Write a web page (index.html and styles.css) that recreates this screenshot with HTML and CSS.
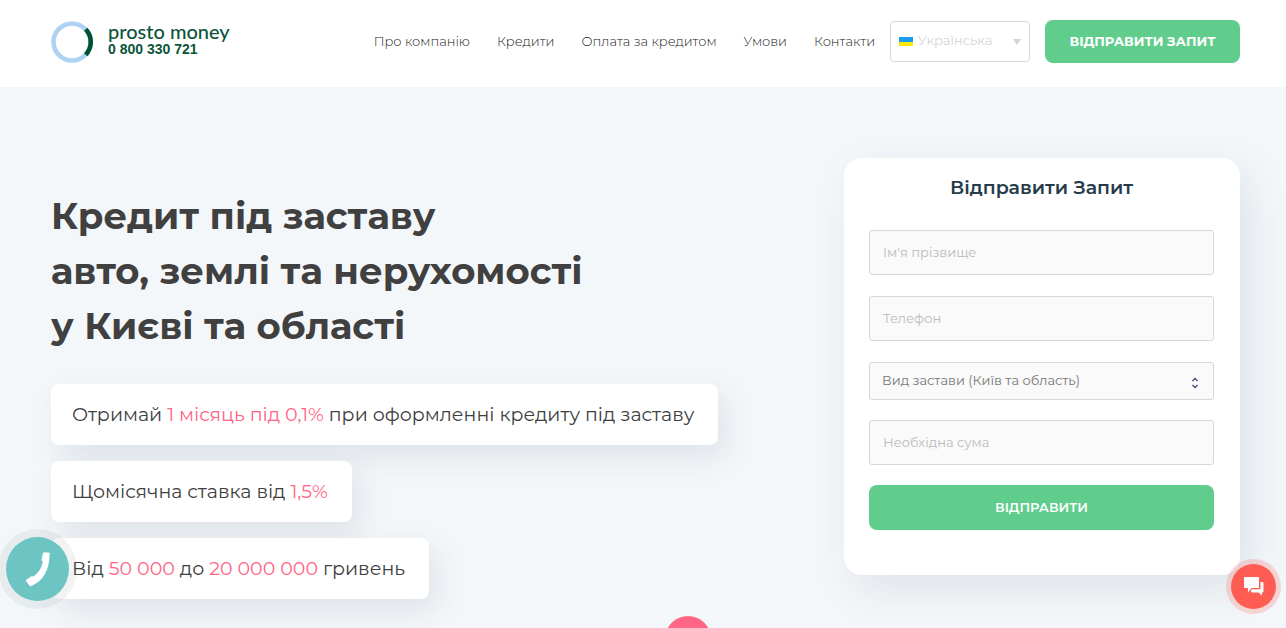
FILE: index.html
```html
<!DOCTYPE html>
<html lang="uk">
<head>
<meta charset="utf-8">
<meta name="viewport" content="width=device-width, initial-scale=1">
<title>Prosto Money</title>
<link rel="stylesheet" href="styles.css">
</head>
<body>
<header class="header">
  <a class="logo" href="#">
    <svg class="logo-mark" viewBox="0 0 42 42" aria-hidden="true">
      <circle cx="21" cy="21" r="18.5" fill="none" stroke="#aed2f2" stroke-width="4.6"/>
      <path d="M34.7 8.2A18.7 18.7 0 0 1 34.7 33.8" fill="none" stroke="#005234" stroke-width="4.6"/>
    </svg>
    <span class="logo-text">
      <span class="logo-name">prosto money</span>
      <span class="logo-phone">0 800 330 721</span>
    </span>
  </a>
  <nav class="nav">
    <a href="#">Про компанію</a>
    <a href="#">Кредити</a>
    <a href="#">Оплата за кредитом</a>
    <a href="#">Умови</a>
    <a href="#">Контакти</a>
  </nav>
  <div class="language">
    <svg class="flag" viewBox="0 0 14 9" aria-hidden="true">
      <path d="M0 0h14v5H0z" fill="#199df0"/>
      <path d="M0 5h14V9H0z" fill="#fbe90a"/>
    </svg>
    <select class="language-select" aria-label="Мова">
      <option>Українська</option>
    </select>
    <svg class="language-arrow" viewBox="0 0 8 6" aria-hidden="true"><path d="M0 0h8L4 6z" fill="#cfd4d8"/></svg>
  </div>
  <button class="button header-button" type="button">ВІДПРАВИТИ ЗАПИТ</button>
</header>

<main class="hero">
  <section class="offer">
    <h1 class="title">Кредит під заставу<br>авто, землі та нерухомості<br>у Києві та області</h1>
    <ul class="facts">
      <li class="fact">Отримай <em>1 місяць під 0,1%</em> при оформленні кредиту під заставу</li>
      <li class="fact">Щомісячна ставка від <em>1,5%</em></li>
      <li class="fact">Від <em>50 000</em> до <em>20 000 000</em> гривень</li>
    </ul>
  </section>

  <form class="request">
    <h2 class="request-title">Відправити Запит</h2>
    <div class="inputs">
      <input class="field" type="text" placeholder="Ім'я прізвище" aria-label="Ім'я прізвище">
      <input class="field" type="tel" placeholder="Телефон" aria-label="Телефон">
      <div class="select-wrap">
        <select class="field field-select" aria-label="Вид застави">
          <option>Вид застави (Київ та область)</option>
        </select>
        <svg class="select-arrows" viewBox="0 0 8 12" aria-hidden="true">
          <path d="M1.5 4L4 1.5L6.5 4M1.5 8L4 10.5L6.5 8" fill="none" stroke="#3f4a6b" stroke-width="1.3"/>
        </svg>
      </div>
    </div>
    <input class="field" type="text" placeholder="Необхідна сума" aria-label="Необхідна сума">
    <button class="button request-button" type="submit">ВІДПРАВИТИ</button>
  </form>
  <a class="scroll-down" href="#" aria-label="Далі"></a>
</main>

<button class="call" type="button" aria-label="Зателефонувати">
  <svg class="call-icon" viewBox="0 0 24 34" aria-hidden="true">
    <path d="M17 .8Q20 -.3 23 .8Q24.2 1 23.5 3C23.500 18 17 29 5.500 34Q4 34.800 3 33L.3 29.300Q-.5 28 1 27.200L5.500 24.200L7.500 24.500C12.500 21 15.500 16 16.800 10L15.500 8Z" fill="#fff"/>
  </svg>
</button>
<button class="chat" type="button" aria-label="Чат">
  <svg class="chat-icon" viewBox="0 0 20 19" aria-hidden="true">
    <path d="M1 0H14Q15 0 15 1V10Q15 11 14 11H7.500L4 15.500V11H1Q0 11 0 10V1Q0 0 1 0Z" fill="#fff"/>
    <path d="M16.500 5H18.500Q19.500 5 19.500 6V14.500Q19.500 15.500 18.500 15.500H18V18.800L14.500 15.500H8Q7 15.500 7 14.500V13L8 12.300H15.500Q16.500 12.300 16.500 11.300Z" fill="#fff"/>
  </svg>
</button>
</body>
</html>
```
FILE: styles.css
```css
* {
  box-sizing: border-box;
}

body {
  margin: 0;
  background: #f3f7fa;
  color: #404040;
  font-family: Montserrat, Inter, "Noto Sans", sans-serif;
}

button,
input,
select {
  font-family: inherit;
}

.header {
  display: flex;
  align-items: center;
  gap: 15px;
  height: 87px;
  padding: 0 46px 4px 51px;
  background: #fff;
}

.logo {
  display: flex;
  align-items: center;
  gap: 15px;
  margin-right: auto;
  color: #0b5539;
  text-decoration: none;
  white-space: nowrap;
}

.logo-mark {
  width: 42px;
  height: 42px;
}

.logo-text {
  display: flex;
  flex-direction: column;
  padding-bottom: 4px;
}

.logo-name {
  font-family: Lato, sans-serif;
  font-size: 20px;
  font-weight: 500;
  line-height: 18px;
}

.logo-phone {
  font-family: "Liberation Sans", sans-serif;
  font-size: 14px;
  font-weight: 700;
  line-height: 18px;
}

.nav {
  display: flex;
  gap: 27px;
  padding-bottom: 2px;
  font-size: 13px;
  font-weight: 300;
  white-space: nowrap;
}

.nav a {
  color: #202020;
  text-decoration: none;
}

.language {
  position: relative;
  width: 140px;
}

.language-select {
  appearance: none;
  width: 100%;
  height: 41px;
  padding: 0 24px 4px 27px;
  border: 1px solid #d5d9dd;
  border-radius: 4px;
  background: #fff;
  color: #d2d6da;
  font-size: 13px;
}

.flag {
  position: absolute;
  top: 16px;
  left: 9px;
  width: 14px;
  height: 9px;
}

.language-arrow {
  position: absolute;
  top: 18px;
  right: 9px;
  width: 8px;
  height: 6px;
}

.button {
  padding: 0 0 2px;
  border: 0;
  border-radius: 8px;
  background: #60cd8d;
  color: #fff;
  font-size: 13px;
}

.header-button {
  width: 195px;
  height: 43px;
  font-weight: 700;
}

.hero {
  position: relative;
  display: flex;
  align-items: flex-start;
  justify-content: space-between;
  gap: 40px;
  min-height: calc(100vh - 87px);
  padding: 71px 46px 29px 51px;
  overflow: hidden;
}

.offer {
  padding-top: 30px;
}

.title {
  margin: 0 0 31px;
  font-size: 37px;
  font-weight: 700;
  line-height: 55px;
}

.facts {
  display: flex;
  flex-direction: column;
  align-items: flex-start;
  gap: 16px;
  margin: 0;
  padding: 0;
  list-style: none;
}

.fact {
  padding: 0 24px 0 21px;
  border-radius: 8px;
  background: #fff;
  box-shadow: 8px 12px 30px rgba(50, 60, 80, 0.1);
  font-size: 19px;
  line-height: 61px;
}

.fact em {
  color: #ff6584;
  font-style: normal;
}

.request {
  display: flex;
  flex: 0 0 396px;
  flex-direction: column;
  gap: 20px;
  padding: 15px 26px 45px 25px;
  border-radius: 18px;
  background: #fff;
  box-shadow: 10px 15px 40px rgba(50, 60, 80, 0.1);
}

.request-title {
  margin: 0 0 7px;
  color: #263c4b;
  font-size: 19px;
  font-weight: 600;
  line-height: 30px;
  text-align: center;
}

.inputs {
  display: flex;
  flex-direction: column;
  gap: 21px;
}

.field {
  width: 100%;
  height: 45px;
  padding: 0 13px 2px;
  border: 1px solid #d5d8d8;
  border-radius: 3px;
  background: #fafafa;
  color: #777;
  font-size: 13px;
}

.field::placeholder {
  color: #bbb;
}

.select-wrap {
  position: relative;
  height: 38px;
}

.field-select {
  appearance: none;
  height: 38px;
  padding: 0 30px 2px 12px;
}

.select-arrows {
  position: absolute;
  top: 15px;
  right: 15px;
  width: 8px;
  height: 12px;
}

.request-button {
  height: 45px;
  font-weight: 600;
}

.scroll-down {
  position: absolute;
  top: 529px;
  left: calc(50% + 22px);
  width: 46px;
  height: 46px;
  border-radius: 50%;
  background: #ff6584;
}

.call,
.chat {
  position: fixed;
  display: grid;
  place-items: center;
  padding: 0;
  border: 0;
  border-radius: 50%;
}

.call {
  bottom: 27px;
  left: 6px;
  width: 63px;
  height: 64px;
  background: #6cc5c2;
  box-shadow: 0 0 0 8px rgba(70, 80, 90, 0.07);
}

.call-icon {
  width: 24px;
  height: 34px;
}

.chat {
  right: 10px;
  bottom: 19px;
  width: 45px;
  height: 45px;
  background: #ff5c53;
  box-shadow: 0 0 0 5px rgba(255, 92, 83, 0.22);
}

.chat-icon {
  width: 20px;
  height: 19px;
}
```
